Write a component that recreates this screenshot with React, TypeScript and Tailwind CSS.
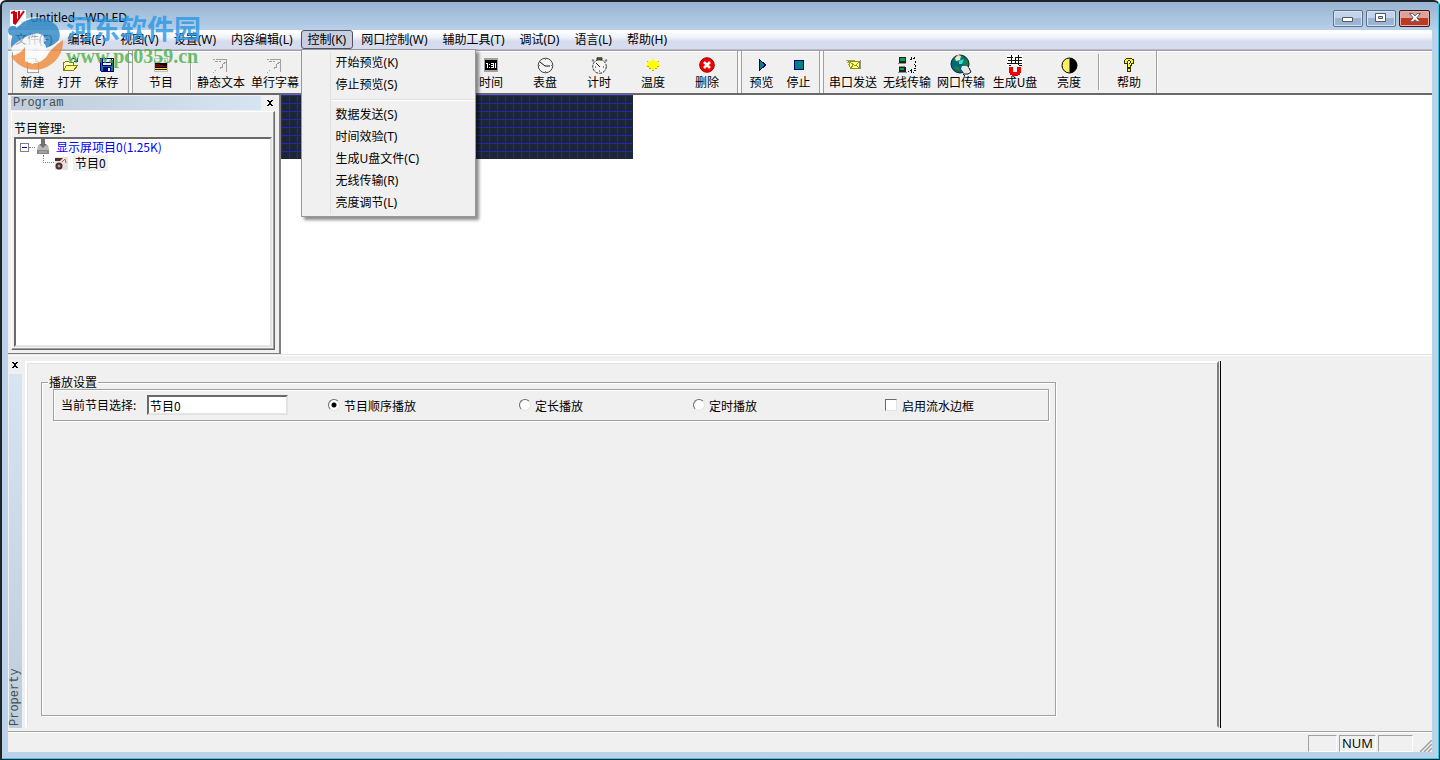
import type { ReactNode } from 'react'

const menus = [
  '文件(F)', '编辑(E)', '视图(V)', '设置(W)', '内容编辑(L)', '控制(K)',
  '网口控制(W)', '辅助工具(T)', '调试(D)', '语言(L)', '帮助(H)',
]

const dropdown = [
  ['开始预览(K)', '停止预览(S)'],
  ['数据发送(S)', '时间效验(T)', '生成U盘文件(C)', '无线传输(R)', '亮度调节(L)'],
]

function Icon({ w = 16, h = 16, children }: { w?: number; h?: number; children: ReactNode }) {
  return (
    <svg width={w} height={h} viewBox={`0 0 ${w} ${h}`} shapeRendering="crispEdges" fill="none">
      {children}
    </svg>
  )
}

const NewIcon = () => (
  <Icon>
    <path d="M2.5 1.5h8l3 3v11h-11z" fill="#f8f8f8" stroke="#a0a0a0" />
    <path d="M10.5 1.5v3h3" stroke="#a0a0a0" />
  </Icon>
)

const OpenIcon = () => (
  <Icon>
    <path d="M1.5 13V5.5h1l1-1h3l1 1h4V8" fill="#ffffc0" stroke="#808000" />
    <path d="M1.5 13.5l3-5h11l-4 5z" fill="#ffff90" stroke="#808000" />
    <path d="M9 2.5h1M10 1.5h3M13 2.5h1M14 3.5h1M12 4.5h3M15 1v4" stroke="#202020" />
  </Icon>
)

const SaveIcon = () => (
  <Icon>
    <path d="M1.5 1.5h13v13h-12l-1-1z" fill="#008080" stroke="#000080" />
    <path d="M4 2h8v6H4z" fill="#f0f0f0" />
    <path d="M3.5 1v7.5h9V1M3 5.5h9" stroke="#000080" />
    <path d="M4 10h8v5H4z" fill="#000080" />
    <path d="M9 11h2v3H9z" fill="#fff" />
    <path d="M13 2h1v1h-1z" fill="#fff" />
  </Icon>
)

const ProgramIcon = () => (
  <Icon>
    <path d="M1.5 1.5h13v13h-13z" fill="#f0f0f0" stroke="#c0c0c0" />
    <path d="M2 6h12v7H2z" fill="#000" />
    <path d="M2 7h4v1h4v1h4v3H2z" fill="#800000" />
    <path d="M2 10h12v1H2z" fill="#000" />
    <path d="M2 11.5h12" stroke="#ffe000" />
    <path d="M2 12.5h12" stroke="#202020" />
  </Icon>
)

const TextIcon = () => (
  <Icon>
    <path d="M0 2.5h2M3 2.5h10M2 4.5h3M6 4.5h2M11 5.5h2M13.5 2v13M10 6.5h2M9.5 7v3M8 10.5h2M7.5 10v2M2 13.5h1M0 15.5h1" stroke="#a0a0a0" />
  </Icon>
)

const ClockIcon = () => (
  <Icon>
    <path d="M1 1h14v14H1z" fill="#a0a0a0" />
    <path d="M2 3h12v10H2z" fill="#000" />
    <path d="M3 6.5h2M4.5 6v5M6.5 7v1M6.5 10v1M8 6.5h3M8 8.5h3M8 10.5h3M10.5 6v5M12.5 6v5" stroke="#fff" />
  </Icon>
)

const DialIcon = () => (
  <svg width="17" height="17" viewBox="0 0 17 17" fill="none">
    <circle cx="8.5" cy="8.5" r="7.3" fill="#f4f4f4" stroke="#404040" />
    <path d="M3 5l5 4h5" stroke="#101010" />
    <path d="M8.5 2v1M8.5 14v1M2 8.5h1M14 8.5h1" stroke="#707070" />
  </svg>
)

const TimerIcon = () => (
  <svg width="17" height="17" viewBox="0 0 17 17" fill="none">
    <circle cx="8.5" cy="9.5" r="6.8" fill="#f4f4f4" stroke="#303030" strokeDasharray="3 1" />
    <path d="M6 .8h5v2H6z" fill="#707000" stroke="#303030" />
    <path d="M1 3l2 1M16 3l-2 1" stroke="#808080" strokeWidth="2" />
    <path d="M5 6l4 4M4 10h1M12 10h1M8 14h1" stroke="#202020" />
  </svg>
)

const SunIcon = () => (
  <Icon>
    <path d="M7 2h2v2h4v2h1v2h1v1h-2v2h-2v1H9v2H7v-2H5v-1H3V9H1V8h1V6h1V4h4z" fill="#ffff00" />
    <path d="M2 9.5h2M12 9.5h2M4 11.5h2M10 11.5h2M7 13.5h2M2 4.5h1M13 4.5h1" stroke="#b0b000" />
  </Icon>
)

const DeleteIcon = () => (
  <svg width="16" height="16" viewBox="0 0 16 16">
    <circle cx="8" cy="8" r="7.3" fill="#f00000" stroke="#a00000" />
    <path d="M5 5l6 6M11 5l-6 6" stroke="#fff" strokeWidth="2.6" />
  </svg>
)

const PlayIcon = () => (
  <Icon>
    <path d="M5.5 2.500l6 5.500-6 5.500z" fill="#008080" stroke="#000080" />
  </Icon>
)

const StopIcon = () => (
  <Icon>
    <path d="M3.5 3.500h9v9h-9z" fill="#008080" stroke="#000080" />
  </Icon>
)

const MailIcon = () => (
  <Icon>
    <path d="M3.5 4.500h11v7h-9z" fill="#ffff90" stroke="#909000" />
    <path d="M5 5l5 4 4-4M6 11l2-3M14 11l-3-3" stroke="#a0a000" />
    <path d="M1 3.500h9M2 5.500h3M3 7.500h2" stroke="#a0a060" />
    <path d="M15.5 3v9" stroke="#909090" />
  </Icon>
)

const WirelessIcon = () => (
  <Icon w={20} h={18}>
    <path d="M2 1h7v6H2zM2 11h7v5H2z" fill="#202020" />
    <path d="M3 2h5v3H3zM3 12h4v2H3z" fill="#00a050" />
    <path d="M1 7.500h8M1 16.500h9M2 10.500h6" stroke="#909090" />
    <path d="M13 3.500h2M14.500 1v3M16 2.500h2M17.500 1v2M18.500 5v2M17 8.500h1M18.500 9v2M17 12.500h2M13 14.500h2M14.500 13v4M16 16.500h1M17 14.500h2" stroke="#101010" />
    <path d="M11 15.500h1" stroke="#0000ff" />
  </Icon>
)

const GlobeIcon = () => (
  <svg width="22" height="22" viewBox="0 0 22 22">
    <circle cx="10" cy="10" r="9" fill="#006878" stroke="#102030" />
    <path d="M4 4l4-3 5 1-1 4-4 2-4-1zM12 8l5-3 1 6-4 3zM4 12l5 1 1 4-4-1z" fill="#208040" />
    <path d="M5 4l3-3 3 1-1 4-4 1z" fill="#e8e8d8" />
    <path d="M9 7l5-2-2 5H9z" fill="#20e8f0" />
    <path d="M12 12h5l3 4-2 3h-4l-3-4z" fill="#e8e8e8" />
    <path d="M19 14l2 4-3 2h-5l2 2" fill="none" stroke="#101010" />
  </svg>
)

const UsbIcon = () => (
  <Icon w={16} h={22}>
    <path d="M0 1h16v11H0z" fill="#fff" />
    <path d="M0 3.500h6M8 3.500h7M1 6.500h14M0 9.500h15M4.500 1v9M8.500 4v5M11.500 1v10M2 11.500h2M12 11.500h3" stroke="#101010" />
    <path d="M2 13h4v5h4v-5h4v6h-1v2h-2v1H5v-1H3v-2H2z" fill="#f00000" />
  </Icon>
)

const BrightIcon = () => (
  <svg width="17" height="17" viewBox="0 0 17 17">
    <circle cx="8.500" cy="8.500" r="7.500" fill="#f8f060" stroke="#000" />
    <path d="M8.500 1a7.500 7.500 0 0 1 0 15z" fill="#000" />
  </svg>
)

const HelpIcon = () => (
  <Icon>
    <path d="M5 1h6v1h2v5h-2v2h-1v2H6V7h2V6h1V4H7v3H3V3h1V2h1zM6 11h4v4H6z" fill="#303000" />
    <path d="M5 2h6v1h1v3h-2v2H9v2H7V7h2V6h1V4H9V3H7v1H6v2H4V3h1zM7 12h2v2H7z" fill="#ffff00" />
  </Icon>
)

interface Tool {
  label: string
  icon: ReactNode
}

const fileTools: Tool[] = [
  { label: '新建', icon: <NewIcon /> },
  { label: '打开', icon: <OpenIcon /> },
  { label: '保存', icon: <SaveIcon /> },
]
const textTools: Tool[] = [
  { label: '静态文本', icon: <TextIcon /> },
  { label: '单行字幕', icon: <TextIcon /> },
]
const insertTools: Tool[] = [
  { label: '时间', icon: <ClockIcon /> },
  { label: '表盘', icon: <DialIcon /> },
  { label: '计时', icon: <TimerIcon /> },
  { label: '温度', icon: <SunIcon /> },
  { label: '删除', icon: <DeleteIcon /> },
]
const previewTools: Tool[] = [
  { label: '预览', icon: <PlayIcon /> },
  { label: '停止', icon: <StopIcon /> },
]
const sendTools: Tool[] = [
  { label: '串口发送', icon: <MailIcon /> },
  { label: '无线传输', icon: <WirelessIcon /> },
  { label: '网口传输', icon: <GlobeIcon /> },
  { label: '生成U盘', icon: <UsbIcon /> },
  { label: '亮度', icon: <BrightIcon /> },
]

function ToolButtons({ tools, narrow }: { tools: Tool[]; narrow?: boolean }) {
  return tools.map((t) => (
    <button
      key={t.label}
      type="button"
      className={`flex h-full shrink-0 flex-col items-center pt-1 whitespace-nowrap ${narrow ? 'w-[37px]' : 'w-[54px]'}`}
    >
      <span className="flex h-5 items-center justify-center">{t.icon}</span>
      <span className="leading-[14px]">{t.label}</span>
    </button>
  ))
}

// gap between two docked bars
function Grip() {
  return <div className="mx-px h-full w-[5px] shrink-0 border-x border-[#a0a0a0] bg-[#f8f8f8]" />
}

function Divider() {
  return <div className="mx-[2px] h-[36px] w-[2px] shrink-0 self-center border-l border-[#a0a0a0] bg-white" />
}

function CloseX() {
  return (
    <svg width="8" height="7" viewBox="0 0 8 7" shapeRendering="crispEdges">
      <path d="M1 0h2v1h2V0h2v1H6v1H5v2h1v1h1v1H5V5H3v1H1V5h1V4h1V2H2V1H1z" fill="#000" />
    </svg>
  )
}

function TitleBar() {
  return (
    <header className="flex h-[28px] items-center px-[2px]">
      <svg width="16" height="16" viewBox="0 0 16 16" className="mt-1">
        <path d="M0 0h16v16H0z" fill="#fff" />
        <path d="M1 3l3-1v11l2 1M6 2v10M9 1v8M14 1L5 14" stroke="#d00010" strokeWidth="2" fill="none" />
        <path d="M11 12h4M12 14h3" stroke="#606060" />
      </svg>
      <h1 className="mt-1 ml-1 flex-1 font-['Noto_Sans','Noto_Sans_CJK_SC',sans-serif] text-xs">Untitled - WDLED</h1>
      <div className="mt-1 flex gap-[3px]">
        <button type="button" aria-label="Minimize" className="flex h-[17px] w-[30px] items-center justify-center rounded-[2px] border border-[#5a6f8c] bg-linear-to-b from-[#c3d4e8] from-45% to-[#9ab4d2] to-50% shadow-[inset_0_0_0_1px_#d6e3f2]">
          <svg width="12" height="6" viewBox="0 0 12 6" className="mt-1"><path d="M.5 .5h10v4H.5z" fill="#fff" stroke="#535666" /></svg>
        </button>
        <button type="button" aria-label="Maximize" className="flex h-[17px] w-[30px] items-center justify-center rounded-[2px] border border-[#5a6f8c] bg-linear-to-b from-[#c3d4e8] from-45% to-[#9ab4d2] to-50% shadow-[inset_0_0_0_1px_#d6e3f2]">
          <svg width="12" height="10" viewBox="0 0 12 10"><path d="M.5 .5h10v8H.5zM3.500 3.500h4v2h-4z" fill="#fff" fillRule="evenodd" stroke="#535666" /></svg>
        </button>
        <button type="button" aria-label="Close" className="flex h-[17px] w-[31px] items-center justify-center rounded-[2px] border border-[#431422] bg-linear-to-b from-[#e0a196] from-45% to-[#bf3a20] to-50% shadow-[inset_0_0_0_1px_#e9b0a5]">
          <svg width="12" height="10" viewBox="0 0 12 10">
            <path d="M.7 .6h3.200L6 2.900 8.100 .6h3.200L7.900 4.800l3.400 4H8.100L6 6.700 3.900 8.800H.7l3.400-4z" fill="#fff" stroke="#535666" />
          </svg>
        </button>
      </div>
    </header>
  )
}

function MenuBar() {
  return (
    <nav className="flex h-[20px] gap-px border-b border-[#b6bccc] bg-linear-to-b from-white from-10% via-[#eef1f9] via-40% to-[#d6dcee] to-60% font-['Noto_Sans','Noto_Sans_CJK_SC',sans-serif]">
      {menus.map((m) =>
        m === '控制(K)' ? (
          <div key={m} className="relative">
            <button type="button" className="h-[19px] rounded-[3px] border border-[#4c5262] bg-[#c9cede] px-[6px] leading-[17px]">
              {m}
            </button>
            <ControlMenu />
          </div>
        ) : (
          <button key={m} type="button" className="px-[7px] leading-[19px] whitespace-nowrap">
            {m}
          </button>
        ),
      )}
    </nav>
  )
}

function ControlMenu() {
  return (
    <div className="absolute top-[19px] left-0 z-20 w-[175px] border border-[#979797] bg-[#f0f0f0] py-[2px] shadow-[3px_3px_3px_rgba(0,0,0,0.45)]">
      {dropdown.map((group, i) => (
        <ul key={i} className="ml-[28px] border-l border-[#e0e0e0]">
          {i > 0 && <li className="ml-px flex h-2 items-center"><div className="h-[2px] w-full border-t border-[#e0e0e0] bg-white" /></li>}
          {group.map((item) => (
            <li key={item}>
              <button type="button" className="block h-[22px] w-full pl-[5px] text-left leading-[22px]">
                {item}
              </button>
            </li>
          ))}
        </ul>
      ))}
    </div>
  )
}

function Toolbar() {
  return (
    <div className="flex h-[45px] items-stretch overflow-hidden border-t border-b-2 border-t-[#a0a0a0] border-b-[#696969] bg-[#f0f0f0] pl-1 shadow-[inset_0_1px_0_#fff]">
      <div className="mr-px w-px shrink-0 bg-[#a0a0a0]" />
      <ToolButtons tools={fileTools} narrow />
      <div className="w-[2px] shrink-0" />
      <Grip />
      <ToolButtons tools={[{ label: '节目', icon: <ProgramIcon /> }]} />
      <Divider />
      <ToolButtons tools={textTools} />
      <div className="w-[162px] shrink-0" />
      <ToolButtons tools={insertTools} />
      <div className="w-[2px] shrink-0" />
      <Grip />
      <ToolButtons tools={previewTools} narrow />
      <div className="w-px shrink-0" />
      <Grip />
      <div className="w-px shrink-0" />
      <ToolButtons tools={sendTools} />
      <Divider />
      <ToolButtons tools={[{ label: '帮助', icon: <HelpIcon /> }]} />
      <div className="w-[2px] shrink-0 border-l border-[#a0a0a0] bg-white" />
    </div>
  )
}

function ProgramPanel() {
  return (
    <aside className="flex w-[273px] shrink-0 flex-col border-r-2 border-b border-[#808080] p-[3px] pt-px">
      <div className="flex h-[14px] items-center justify-between">
        <h2 className="h-full w-[250px] bg-linear-to-r from-[#bfcddb] to-[#d7e4f2] pl-[2px] font-['Liberation_Mono',monospace] leading-[14px] text-[#434e54]">
          Program
        </h2>
        <button type="button" aria-label="Close Program" className="mr-[2px]"><CloseX /></button>
      </div>
      <div className="mt-px mr-px flex flex-1 flex-col border border-t-white border-r-[#696969] border-b-[#696969] border-l-white p-[2px] shadow-[inset_-1px_-1px_0_#a0a0a0]">
        <h3 className="mt-[6px] mb-px leading-[16px]">节目管理:</h3>
        <div className="flex-1 border-2 border-t-[#696969] border-r-[#e3e3e3] border-b-[#e3e3e3] border-l-[#696969] bg-white pl-1">
          <div className="flex h-4 items-center">
            <button type="button" aria-label="Collapse" className="flex size-[9px] items-center justify-center border border-[#808080]">
              <span className="h-px w-[5px] bg-[#0000c0]" />
            </button>
            <div className="w-[6px] border-t border-dotted border-[#808080]" />
            <svg width="14" height="16" viewBox="0 0 14 16" className="ml-px">
              <path d="M2 6h10l1 5H1z" fill="#b8b8b8" />
              <path d="M5 0h4v5h2L7 9 3 5h2z" fill="#707070" />
              <path d="M1 11h12v4H1z" fill="#888" />
              <path d="M3 13h8" stroke="#b8b8b8" />
            </svg>
            <span className="ml-[6px] text-[#0000ff]">显示屏项目0(1.25K)</span>
          </div>
          <div className="flex h-4 items-center pl-[23px]">
            <div className="h-[8px] w-[11px] -translate-y-1 border-b border-l border-dotted border-[#808080]" />
            <svg width="15" height="15" viewBox="0 0 15 15">
              <path d="M1 1h13v13H1z" fill="#e8e2de" />
              <path d="M1 2h8L6 5H1z" fill="#503028" />
              <circle cx="5" cy="10" r="3.500" fill="#403030" />
              <circle cx="5" cy="10" r="1.500" fill="#d09080" />
              <path d="M8 6l3-3 1 4" stroke="#a06050" fill="none" />
            </svg>
            <span className="ml-1 bg-[#f0f0f0] px-[2px] leading-4">节目0</span>
          </div>
        </div>
      </div>
    </aside>
  )
}

const radioClass =
  'mr-1 size-3 appearance-none rounded-full border border-t-[#696969] border-r-[#e3e3e3] border-b-[#e3e3e3] border-l-[#696969] bg-white checked:bg-[radial-gradient(circle,#000_2px,#fff_3px)]'

function PlayOption({ label, checked, className }: { label: string; checked?: boolean; className: string }) {
  return (
    <label className={`flex shrink-0 items-center ${className}`}>
      <input type="radio" name="mode" defaultChecked={checked} className={radioClass} />
      <span className="mt-[2px]">{label}</span>
    </label>
  )
}

function PropertyPanel() {
  return (
    <section className="flex flex-1 border-t border-[#e3e3e3] pt-[6px] pb-[3px] shadow-[inset_0_1px_0_#fff]">
      <div className="flex w-[14px] shrink-0 flex-col items-center">
        <button type="button" aria-label="Close Property" className="mt-px mb-[5px]"><CloseX /></button>
        <h2 className="w-[13px] flex-1 rotate-180 bg-linear-to-t from-[#d7e4f2] to-[#bfcddb] pt-[2px] font-['Liberation_Mono',monospace] leading-[13px] text-[#434e54] [writing-mode:vertical-rl]">
          Property
        </h2>
      </div>
      <div className="ml-[3px] flex w-[1194px] border-2 border-t-white border-r-[#808080] border-b-transparent border-l-white pt-[12px] pr-[161px] pb-[10px] pl-[14px] shadow-[inset_1px_1px_0_#e3e3e3]">
        <fieldset className="min-w-0 flex-1 border border-[#a0a0a0] pr-[6px] pl-[11px] shadow-[1px_1px_0_#fff,inset_1px_1px_0_#fff]">
          <legend className="-ml-[5px] bg-[#f0f0f0] px-px leading-[14px]">播放设置</legend>
          <div className="flex h-[32px] items-center border border-[#a0a0a0] pl-[7px] shadow-[1px_1px_0_#fff,inset_1px_1px_0_#fff]">
            <label htmlFor="program" className="w-[86px] shrink-0">当前节目选择:</label>
            <input
              id="program"
              defaultValue="节目0"
              className="h-5 w-[141px] border-2 border-t-[#696969] border-r-[#e3e3e3] border-b-[#e3e3e3] border-l-[#696969] bg-white px-px"
            />
            <PlayOption label="节目顺序播放" checked className="ml-[40px] w-[191px]" />
            <PlayOption label="定长播放" className="w-[174px]" />
            <PlayOption label="定时播放" className="w-[192px]" />
            <label className="flex items-center">
              <input type="checkbox" className="mr-[5px] size-3 appearance-none border border-t-[#696969] border-r-[#e3e3e3] border-b-[#e3e3e3] border-l-[#696969] bg-white" />
              <span className="mt-[2px]">启用流水边框</span>
            </label>
          </div>
        </fieldset>
      </div>
      <div className="ml-px w-px bg-black" />
    </section>
  )
}

function StatusBar() {
  return (
    <footer className="flex h-[21px] items-end justify-end gap-[2px] border-t border-[#a0a0a0] font-['Open_Sans',sans-serif] text-[13px] shadow-[inset_0_1px_0_#fff]">
      <div className="h-[17px] w-[29px] border border-t-[#a0a0a0] border-r-white border-b-white border-l-[#a0a0a0]" />
      <div className="h-[17px] w-[37px] border border-t-[#a0a0a0] border-r-white border-b-white border-l-[#a0a0a0] text-center leading-[15px]">NUM</div>
      <div className="h-[17px] w-[35px] border border-t-[#a0a0a0] border-r-white border-b-white border-l-[#a0a0a0]" />
      <svg width="12" height="12" viewBox="0 0 12 12" className="ml-[5px]">
        <path d="M0 12L12 0M4 12l8-8M8 12l4-4" stroke="#a0a0a0" strokeWidth="1.500" />
      </svg>
    </footer>
  )
}

function Watermark() {
  return (
    <div className="pointer-events-none absolute top-[10px] left-[2px] z-10 flex items-center opacity-80">
      <svg width="60" height="58" viewBox="0 0 60 58" fill="none">
        <circle cx="31" cy="30" r="25" fill="#fff" fillOpacity=".85" />
        <path d="M7 36A27 27 0 0 1 52 13c3 4 5 9 3 15-6 6-13 9-19 8l6-8c-2-7-10-8-16-5C17 27 11 31 7 36z" fill="#2c86c4" />
        <path d="M59 28A28 28 0 0 1 7 44c6-1 11-4 14-9v14c10 5 17 1 22-5 3-6 9-11 16-16z" fill="#f08a3c" />
        <path d="M21 30c4-3 8-5 12-4v5c5-2 9 0 9 5-1 6-5 10-8 13V36c-3-1-5 0-5 4v12l-8-3z" fill="#fff" />
        <circle cx="9" cy="19" r="5" fill="#2c86c4" />
      </svg>
      <div className="ml-[2px]">
        <p className="font-['Noto_Sans_CJK_SC',sans-serif] text-[27px] leading-[30px] font-bold text-[#2a97e4]">河东软件园</p>
        <p className="font-['Liberation_Serif',serif] text-xl leading-[26px] font-bold text-[#4bb04c]">www.pc0359.cn</p>
      </div>
    </div>
  )
}

export default function App() {
  return (
    <div className="relative flex min-h-screen flex-col rounded-t-[6px] border-t-2 border-r border-b border-l-2 border-[#202428] bg-[#bad2ea] bg-linear-to-b from-[#99b4d1] to-[#bad2ea] to-[30px] font-['Noto_Sans_CJK_SC',sans-serif] text-xs text-black">
      <div className="flex flex-1 flex-col border-r border-b border-[#22d0ee] pr-[6px] pb-[6px] pl-[6px]">
        <TitleBar />
        <MenuBar />
        <div className="flex flex-1 flex-col bg-[#f0f0f0]">
          <Toolbar />
          <main className="flex flex-1 flex-col">
            <div className="flex h-[259px]">
              <ProgramPanel />
              <div className="flex-1 bg-white">
                <div className="h-[64px] w-[352px] max-w-full bg-[#1c2638] bg-[linear-gradient(#2226b4_1px,transparent_1px),linear-gradient(90deg,#2226b4_1px,transparent_1px)] bg-[size:8px_8px]" />
              </div>
            </div>
            <PropertyPanel />
          </main>
          <StatusBar />
        </div>
      </div>
      <Watermark />
    </div>
  )
}
